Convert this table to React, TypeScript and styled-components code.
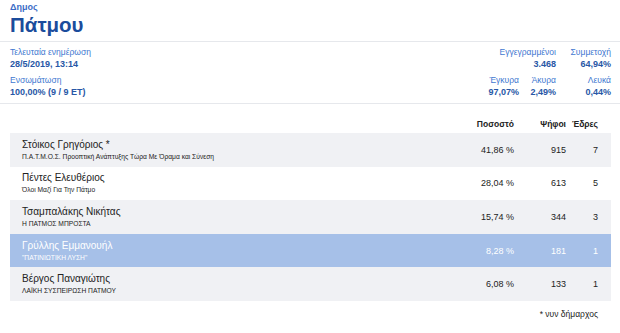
import React from 'react';
import styled, { createGlobalStyle } from 'styled-components';

const GlobalStyle = createGlobalStyle`
  body {
    margin: 0;
    background: #ffffff;
    font-family: "Liberation Sans", Arial, sans-serif;
  }
`;

const Page = styled.div`
  width: 620px;
  height: 333px;
  overflow: hidden;
  background: #fff;
`;

const Header = styled.div`
  padding: 2px 10px 4px;
  border-bottom: 1px solid #e6e8ec;
`;

const Kicker = styled.div`
  font-size: 9px;
  line-height: 11px;
  font-weight: 700;
  color: #3a6bc6;
`;

const Title = styled.h1`
  margin: 0;
  font-size: 20.5px;
  line-height: 24px;
  font-weight: 700;
  color: #1b4c9c;
`;

const Info = styled.div`
  display: flex;
  justify-content: space-between;
  padding: 4px 9px 4px 10px;
  border-bottom: 1px solid #e6e8ec;
`;

const InfoColumn = styled.div`
  display: flex;
  flex-direction: column;
  gap: 3px;
`;

const StatsGrid = styled.div`
  display: grid;
  grid-template-columns: 40px 37px 55px;
  row-gap: 3px;
`;

const Stat = styled.div<{ $span?: number }>`
  grid-column: ${p => (p.$span ? `span ${p.$span}` : 'auto')};
  text-align: right;
`;

const Label = styled.div`
  font-size: 8.5px;
  line-height: 12px;
  color: #4177d0;
`;

const Value = styled.div`
  font-size: 9px;
  line-height: 13px;
  font-weight: 700;
  color: #2857a6;
`;

const Table = styled.div`
  margin: 9px 9px 0 10px;
`;

const Row = styled.div<{ $bg: string; $fg: string; $head?: boolean }>`
  display: grid;
  grid-template-columns: 1fr 80px 52px 32px;
  padding: 0 13px 0 12px;
  height: ${p => (p.$head ? '20px' : '33.6px')};
  align-items: center;
  background: ${p => p.$bg};
  color: ${p => p.$fg};
`;

const HeadCell = styled.div`
  font-size: 8.5px;
  font-weight: 700;
  color: #222;
  text-align: right;
  align-self: end;
  padding-bottom: 4px;
`;

const Name = styled.div`
  font-size: 10px;
  line-height: 13px;
`;

const Party = styled.div`
  font-size: 6.7px;
  line-height: 10px;
  margin-top: 1px;
`;

const Num = styled.div`
  font-size: 9px;
  text-align: right;
`;

const Footnote = styled.div`
  padding: 8px 22px 0 0;
  text-align: right;
  font-size: 8.5px;
  color: #222;
`;

type Candidate = {
  name: string;
  party: string;
  pct: string;
  votes: number;
  seats: number;
  selected?: boolean;
};

const candidates: Candidate[] = [
  { name: 'Στόικος Γρηγόριος *', party: 'Π.Α.Τ.Μ.Ο.Σ. Προοπτική Ανάπτυξης Τώρα Με Όραμα και Σύνεση', pct: '41,86 %', votes: 915, seats: 7 },
  { name: 'Πέντες Ελευθέριος', party: 'Όλοι Μαζί Για Την Πάτμο', pct: '28,04 %', votes: 613, seats: 5 },
  { name: 'Τσαμπαλάκης Νικήτας', party: 'Η ΠΑΤΜΟΣ ΜΠΡΟΣΤΑ', pct: '15,74 %', votes: 344, seats: 3 },
  { name: 'Γρύλλης Εμμανουήλ', party: '"ΠΑΤΙΝΙΩΤΙΚΗ ΛΥΣΗ"', pct: '8,28 %', votes: 181, seats: 1, selected: true },
  { name: 'Βέργος Παναγιώτης', party: 'ΛΑΪΚΗ ΣΥΣΠΕΙΡΩΣΗ ΠΑΤΜΟΥ', pct: '6,08 %', votes: 133, seats: 1 },
];

const App = () => {
  return (
    <Page>
      <GlobalStyle />
      <Header>
        <Kicker>Δημος</Kicker>
        <Title>Πάτμου</Title>
      </Header>
      <Info>
        <InfoColumn>
          <div>
            <Label>Τελευταία ενημέρωση</Label>
            <Value>28/5/2019, 13:14</Value>
          </div>
          <div>
            <Label>Ενσωμάτωση</Label>
            <Value>100,00% (9 / 9 ΕΤ)</Value>
          </div>
        </InfoColumn>
        <StatsGrid>
          <Stat $span={2}>
            <Label>Εγγεγραμμένοι</Label>
            <Value>3.468</Value>
          </Stat>
          <Stat>
            <Label>Συμμετοχή</Label>
            <Value>64,94%</Value>
          </Stat>
          <Stat>
            <Label>Έγκυρα</Label>
            <Value>97,07%</Value>
          </Stat>
          <Stat>
            <Label>Άκυρα</Label>
            <Value>2,49%</Value>
          </Stat>
          <Stat>
            <Label>Λευκά</Label>
            <Value>0,44%</Value>
          </Stat>
        </StatsGrid>
      </Info>
      <Table>
        <Row $bg="transparent" $fg="#222" $head>
          <div />
          <HeadCell>Ποσοστό</HeadCell>
          <HeadCell>Ψήφοι</HeadCell>
          <HeadCell>Έδρες</HeadCell>
        </Row>
        {candidates.map((c, i) => {
          const bg = c.selected ? '#a6c0e8' : i % 2 === 0 ? '#f0f1f4' : '#ffffff';
          const fg = c.selected ? '#ffffff' : '#222222';
          return (
            <Row key={c.name} $bg={bg} $fg={fg}>
              <div>
                <Name>{c.name}</Name>
                <Party>{c.party}</Party>
              </div>
              <Num>{c.pct}</Num>
              <Num>{c.votes}</Num>
              <Num>{c.seats}</Num>
            </Row>
          );
        })}
      </Table>
      <Footnote>* νυν δήμαρχος</Footnote>
    </Page>
  );
};

export default App;
